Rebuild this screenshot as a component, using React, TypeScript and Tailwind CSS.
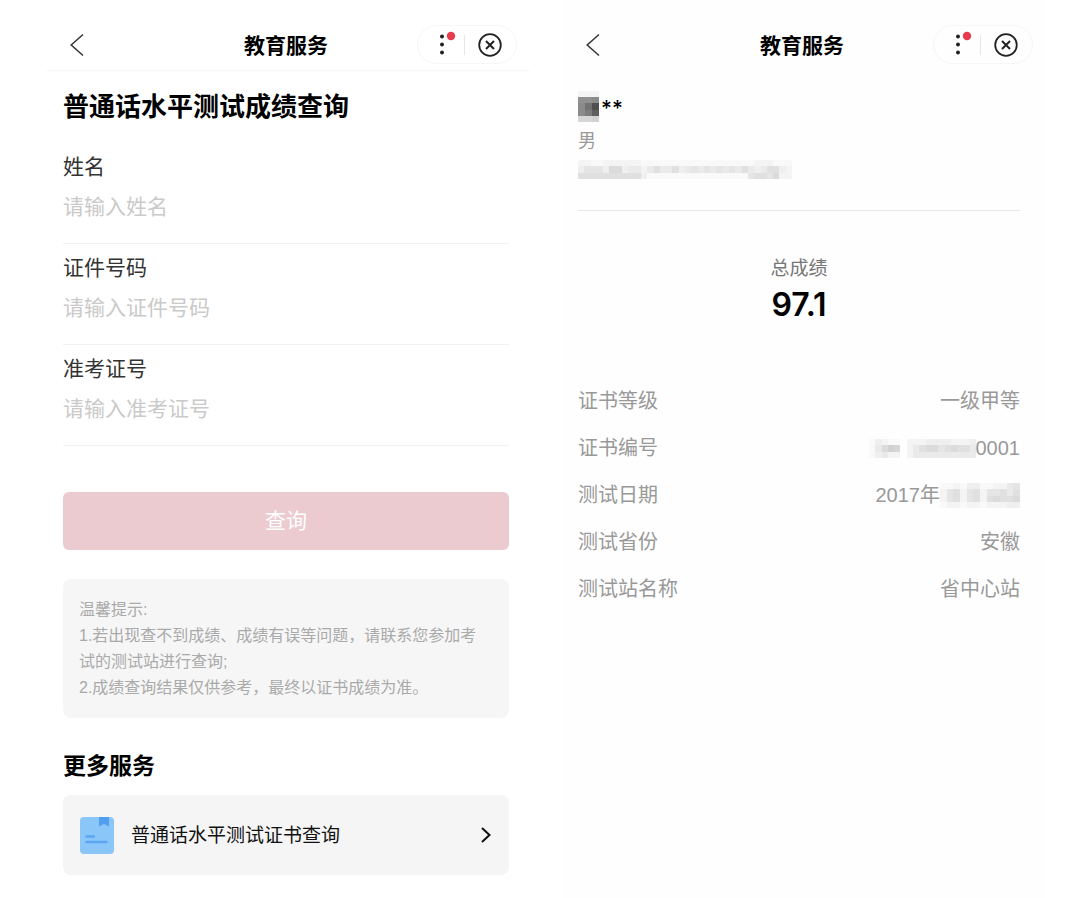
import React, { useState } from 'react';

type MosaicProps = {
    rows: string[];
    className: string;
}

type FieldProps = {
    id: string;
    label: string;
    placeholder: string;
}

const fields: FieldProps[] = [
    { id: 'name', label: '姓名', placeholder: '请输入姓名' },
    { id: 'idNumber', label: '证件号码', placeholder: '请输入证件号码' },
    { id: 'ticket', label: '准考证号', placeholder: '请输入准考证号' },
];

const nameMosaic = ['222', 'mmn', 'nsz', 'nqw', '889'];

const idMosaic = [
    '2211222222111111111111111111222111',
    '3555377344246446345454545464346632',
    '6666666666311111111111111115665722',
];

const codeMosaic = [
    '13211022233332223',
    '14798024677567664',
    '13422024444444444',
];

const dateMosaic = [
    '112133112245',
    '256256255646',
    '256256267667',
    '122122122233',
];

// each character is one cell, base 36, higher is darker
const Mosaic = ({ rows, className }: MosaicProps) => {
    return (
        <svg
            className={className}
            viewBox={`0 0 ${rows[0].length} ${rows.length}`}
            preserveAspectRatio="none"
            shapeRendering="crispEdges"
            aria-hidden="true"
        >
            {rows.map((row, y) =>
                row.split('').map((cell, x) => {
                    const v = 254 - parseInt(cell, 36) * 5;
                    return <rect key={`${x}-${y}`} x={x} y={y} width="1" height="1" fill={`rgb(${v},${v},${v})`} />
                })
            )}
        </svg>
    )
}

const Header = ({ className = '' }: { className?: string }) => {
    return (
        <header className={`grid grid-cols-[100px_1fr_100px] items-center pt-[25px] pb-[6px] pl-[9px] pr-[13px] border-b ${className}`}>
            <button aria-label="返回" className="w-10 pl-[14px]">
                <svg className="w-[16px] h-[24px]" viewBox="0 0 16 24" fill="none" stroke="#333" strokeWidth="1.5">
                    <path d="M14 1.5 L2.2 12 L14 22.5" />
                </svg>
            </button>
            <h1 className="text-center text-[21px] leading-[30px] pt-[2px] font-bold text-black">教育服务</h1>
            <div className="flex items-center h-[39px] rounded-full border border-[#f6f6f6]">
                <button aria-label="更多" className="flex-1 h-full flex justify-end pr-2">
                    <svg className="w-[20px] h-[37px]" viewBox="0 0 20 37">
                        <circle cx="6" cy="10.500" r="2" fill="#222" />
                        <circle cx="6" cy="18.500" r="2" fill="#222" />
                        <circle cx="6" cy="26.500" r="2" fill="#222" />
                        <circle cx="15" cy="10" r="4.200" fill="#e93b4e" />
                    </svg>
                </button>
                <div className="w-px h-5 bg-[#e6e6e6]"></div>
                <button aria-label="关闭" className="flex-1 h-full flex items-center pl-[13px]">
                    <svg className="w-[24px] h-[24px]" viewBox="0 0 24 24" fill="none" stroke="#222">
                        <circle cx="12" cy="12" r="10.800" strokeWidth="1.800" />
                        <path d="M8 8 L16 16 M16 8 L8 16" strokeWidth="2" />
                    </svg>
                </button>
            </div>
        </header>
    )
}

const Field = ({ id, label, placeholder }: FieldProps) => {
    const [value, setValue] = useState<string>('');

    return (
        <div className="border-b border-[#f2f2f2] pb-[22px]">
            <label htmlFor={id} className="block text-[21px] leading-7 text-[#333]">{label}</label>
            <input
                id={id}
                value={value}
                onChange={(e) => setValue(e.target.value)}
                placeholder={placeholder}
                className="block w-full h-7 mt-3 text-[21px] leading-7 text-[#333] placeholder:text-[#cacaca] outline-none"
            />
        </div>
    )
}

const QueryScreen = () => {
    return (
        <section>
            <Header className="border-[#f8f8f8]" />
            <div className="pl-[17px] pr-[21px]">
                <h2 className="mt-5 text-[26px] leading-8 font-bold text-black">普通话水平测试成绩查询</h2>
                <div className="mt-[30px] flex flex-col gap-[10px]">
                    {fields.map((f) => <Field key={f.id} {...f} />)}
                </div>
                <button className="mt-[46px] w-full h-[58px] rounded-md bg-[#eccbd0] text-[21px] text-white">查询</button>
                <div className="mt-[29px] rounded-lg bg-[#f6f6f6] pt-[18px] pb-[17px] pl-4 pr-5 text-base leading-[26px] text-[#aaa]">
                    <p>温馨提示:</p>
                    <p>1.若出现查不到成绩、成绩有误等问题，请联系您参加考试的测试站进行查询;</p>
                    <p>2.成绩查询结果仅供参考，最终以证书成绩为准。</p>
                </div>
                <h2 className="mt-8 text-[23px] leading-8 font-bold text-black">更多服务</h2>
                <a href="#certificate" className="mt-[13px] flex items-center h-20 rounded-lg bg-[#f5f5f5] pl-[17px] pr-[17px]">
                    <svg className="w-[34px] h-[37px]" viewBox="0 0 34 37">
                        <rect width="34" height="37" rx="4" fill="#8ac6f8" />
                        <path d="M19 0 H29 V9.500 L24 7 L19 9.500 Z" fill="#529ff0" />
                        <path d="M6.500 19.500 H14 M6.500 25 H26.500" stroke="#5ba5f1" strokeWidth="2.400" strokeLinecap="round" />
                    </svg>
                    <span className="flex-1 pl-[17px] pt-[2px] text-[19px] leading-7 text-[#111]">普通话水平测试证书查询</span>
                    <svg className="w-[12px] h-[18px]" viewBox="0 0 12 18" fill="none" stroke="#111" strokeWidth="2">
                        <path d="M2 2 L9.500 9 L2 16" />
                    </svg>
                </a>
            </div>
        </section>
    )
}

const details = [
    { label: '证书等级', value: '一级甲等' },
    { label: '证书编号', value: <><Mosaic rows={codeMosaic} className="w-[107px] h-[19px]" />0001</> },
    { label: '测试日期', value: <>2017年<Mosaic rows={dateMosaic} className="w-[80px] h-[25px]" /></> },
    { label: '测试省份', value: '安徽' },
    { label: '测试站名称', value: '省中心站' },
];

const ResultScreen = () => {
    return (
        <section className="bg-[#fefefe]">
            <Header className="border-[#fefefe]" />
            <div className="pl-4 pr-[26px] pt-5">
                <div className="border-b border-[#e8e8e8] pb-[31px]">
                    <div className="flex items-center gap-[2px]">
                        <Mosaic rows={nameMosaic} className="w-[21px] h-[31px]" />
                        <span className="pt-1 text-[21px] leading-[27px] font-medium font-[Inter,'Liberation_Sans',sans-serif] text-black">**</span>
                    </div>
                    <div className="mt-[6px] text-[18px] leading-[26px] text-[#999]">男</div>
                    <Mosaic rows={idMosaic} className="block w-[214px] h-[19px] mt-[6px]" />
                </div>
                <div className="mt-11 text-center">
                    <div className="text-[19px] leading-7 text-[#777]">总成绩</div>
                    <div className="text-[32px] leading-[44px] font-semibold font-[Inter,'Liberation_Sans',sans-serif] text-black">97.1</div>
                </div>
                <dl className="mt-[60px] flex flex-col gap-[19px] text-[20px] leading-7 text-[#999]">
                    {details.map((d) => (
                        <div key={d.label} className="flex justify-between">
                            <dt>{d.label}</dt>
                            <dd className="flex items-center">{d.value}</dd>
                        </div>
                    ))}
                </dl>
            </div>
        </section>
    )
}

const App = () => {
    return (
        <main className="min-h-screen bg-white grid grid-cols-2 gap-8 pl-[46px] pr-[34px] font-['Liberation_Sans','Noto_Sans_CJK_SC',sans-serif]">
            <QueryScreen />
            <ResultScreen />
        </main>
    )
}

export default App;
